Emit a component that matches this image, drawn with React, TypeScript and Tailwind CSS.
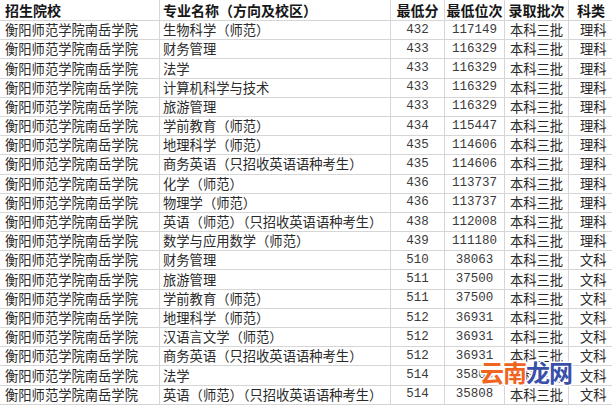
import React from "react";

const rows: [string, string, string, string, string][] = [
  ["生物科学（师范）", "432", "117149", "本科三批", "理科"],
  ["财务管理", "433", "116329", "本科三批", "理科"],
  ["法学", "433", "116329", "本科三批", "理科"],
  ["计算机科学与技术", "433", "116329", "本科三批", "理科"],
  ["旅游管理", "433", "116329", "本科三批", "理科"],
  ["学前教育（师范）", "434", "115447", "本科三批", "理科"],
  ["地理科学（师范）", "435", "114606", "本科三批", "理科"],
  ["商务英语（只招收英语语种考生）", "435", "114606", "本科三批", "理科"],
  ["化学（师范）", "436", "113737", "本科三批", "理科"],
  ["物理学（师范）", "436", "113737", "本科三批", "理科"],
  ["英语（师范）（只招收英语语种考生）", "438", "112008", "本科三批", "理科"],
  ["数学与应用数学（师范）", "439", "111180", "本科三批", "理科"],
  ["财务管理", "510", "38063", "本科三批", "文科"],
  ["旅游管理", "511", "37500", "本科三批", "文科"],
  ["学前教育（师范）", "511", "37500", "本科三批", "文科"],
  ["地理科学（师范）", "512", "36931", "本科三批", "文科"],
  ["汉语言文学（师范）", "512", "36931", "本科三批", "文科"],
  ["商务英语（只招收英语语种考生）", "512", "36931", "本科三批", "文科"],
  ["法学", "514", "35808", "本科三批", "文科"],
  ["英语（师范）（只招收英语语种考生）", "514", "35808", "本科三批", "文科"],
];

const grid =
  "grid grid-cols-[160px_231px_54px_60px_64px_60px] border-b border-[#d6d6d6]";
const cell = "border-r border-[#d6d6d6] flex items-center whitespace-nowrap overflow-hidden";

export default function App() {
  return (
    <div className="relative w-[612px] h-[405px] overflow-hidden bg-white text-[#2a2a2a] font-['Noto_Sans_CJK_SC',sans-serif]">
      <div className="w-[629px]">
        <div className={`${grid} h-[21px] font-bold text-[14px] text-[#161616]`}>
          <div className={`${cell} pl-[5px]`}>招生院校</div>
          <div className={`${cell} pl-[3px]`}>专业名称（方向及校区）</div>
          <div className={`${cell} justify-center`}>最低分</div>
          <div className={`${cell} justify-center`}>最低位次</div>
          <div className={`${cell} justify-center`}>录取批次</div>
          <div className={`${cell} pl-[8px]`}>科类</div>
        </div>
        {rows.map((r, i) => (
          <div key={i} className={`${grid} h-[19.2px] text-[13.3px]`}>
            <div className={`${cell} pl-[5px]`}>衡阳师范学院南岳学院</div>
            <div className={`${cell} pl-[3px]`}>{r[0]}</div>
            <div className={`${cell} justify-center font-['Liberation_Mono',monospace] text-[12.5px] text-[#3a3a3a]`}>
              {r[1]}
            </div>
            <div className={`${cell} justify-center font-['Liberation_Mono',monospace] text-[12.5px] text-[#3a3a3a]`}>
              {r[2]}
            </div>
            <div className={`${cell} justify-center`}>{r[3]}</div>
            <div className={`${cell} pl-[11px]`}>{r[4]}</div>
          </div>
        ))}
      </div>
      <div className="absolute left-[480px] top-[360px] flex text-[24px] font-bold leading-none tracking-[-1px] [paint-order:stroke] [-webkit-text-stroke:3px_white] font-['Noto_Sans_CJK_SC',sans-serif]">
        <span className="text-[#f0641e]">云南</span>
        <span className="text-[#3a4fa8]">龙网</span>
      </div>
    </div>
  );
}
